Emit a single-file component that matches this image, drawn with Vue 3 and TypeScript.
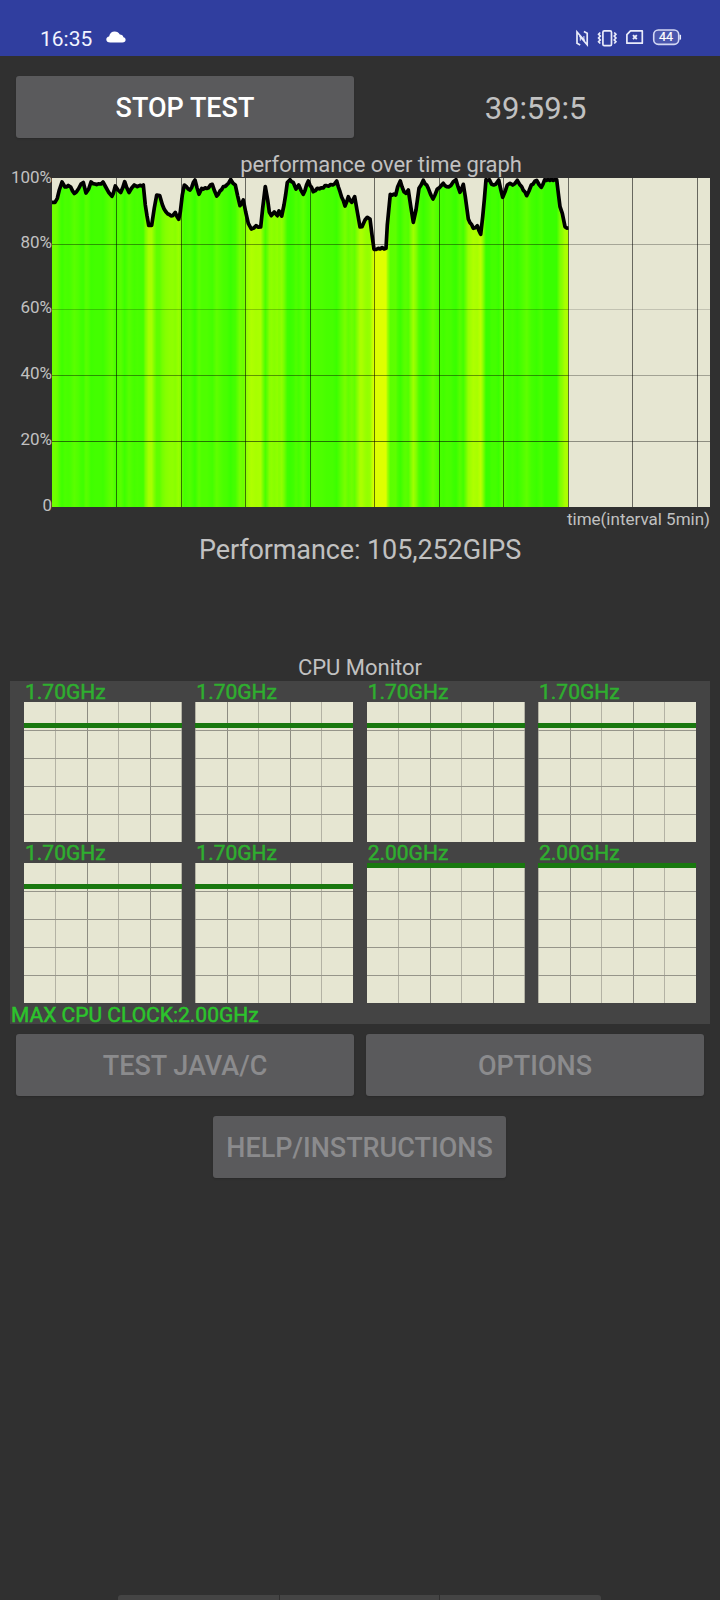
<script setup lang="ts">
type Point = [number, number]

// Plot area in page pixels: x 52..710, 3.29px per percent
const PLOT = { left: 52, width: 658, height: 329 }

// Offsets from the plot's left and top edges
const samples: Point[] = [
  [0, 24.3], [3, 24.3], [5.3, 20.3], [7.3, 12], [10, 4], [13, 9], [16.3, 7.5], [18.7, 9], [22.3, 15.5],
  [26.7, 10.5], [29, 6], [31.3, 4.5], [34, 15], [36.7, 11], [39, 4], [43, 6], [46.3, 5.8], [49, 6], [51, 4],
  [54, 9.5], [57, 14.8], [60, 18.3], [61.3, 15.5], [63.3, 8], [66, 12], [68.7, 14.5], [72.7, 3.7], [77, 14.5],
  [79.7, 10], [82.3, 7], [85.3, 8.7], [88, 7.3], [91.3, 7], [93.3, 27], [96.7, 47.3], [99.7, 47.3], [102.3, 30],
  [104.7, 17], [107.7, 17.5], [110.3, 26.5], [113.7, 33.5], [117.3, 36.5], [120.7, 37.7], [123.3, 34.5],
  [126.7, 41.3], [128.3, 34], [130.3, 17], [132.3, 7], [134.7, 9], [138, 12], [143, 2], [147, 16.3], [149.7, 10.5],
  [154.7, 10.5], [160.3, 6.3], [164.7, 18], [168, 13], [171.3, 8.7], [174.7, 7], [178.7, 1.5], [181, 5.3],
  [183.3, 7], [188, 27.7], [191.3, 22], [193.7, 34], [196.3, 45.3], [199.3, 51], [204, 47.7], [208.7, 49],
  [210.7, 30], [213.3, 8.5], [215.7, 22], [217.3, 34], [219.3, 37.7], [222.3, 34], [225.3, 37.7], [227, 33],
  [229.7, 38], [232, 27], [235.3, 4.5], [238, 1.7], [241.3, 4.5], [244, 11], [246.7, 7], [251.3, 16.3],
  [256.3, 3], [261.3, 13.7], [265.3, 10.3], [269.7, 9.8], [274.7, 7.7], [280.7, 7], [284.7, 3], [288, 13.7],
  [293, 28], [296.3, 18.7], [299.7, 24.3], [302.7, 18.7], [305.3, 33.7], [308, 49], [310, 48.7], [313, 42],
  [315.3, 39.3], [318, 41], [322, 71.3], [326.3, 70.3], [334, 70.3], [335.3, 47], [338.3, 16.3], [343.7, 17],
  [345.7, 8.7], [348.3, 3], [352, 13.7], [354, 15.3], [356.3, 12], [359, 30], [361.3, 44.3], [364, 32],
  [367, 10.3], [371.3, 2.3], [376.3, 10.3], [381, 21], [385.3, 11], [389.7, 7], [391.3, 5.3], [394.7, 8.7],
  [398.7, 7.7], [401.3, 3.7], [404, 1.7], [408, 14.3], [411.3, 6.3], [413.3, 18.7], [416.3, 41], [421.3, 50.3],
  [425.3, 47.7], [428.7, 56.3], [430.7, 38.7], [434, 1.7], [437.3, 1.7], [439.7, 6.3], [443.7, 6.3], [446.7, 2],
  [450.7, 19.3], [455.3, 7], [458, 5.3], [460.7, 7], [465.3, 2.3], [469.7, 8.7], [474.7, 17.7], [479.3, 7],
  [484.7, 2.3], [489.3, 9.3], [492.7, 1.7], [504.7, 1.7], [508, 28.7], [510.3, 35.3], [513, 48.7], [516.5, 50],
]

// Small saw-tooth noise so that the trace keeps its sampled look
const trace: Point[] = []
samples.forEach((p, i) => {
  trace.push(p)
  const next = samples[i + 1]
  if (!next) return
  const gap = next[0] - p[0]
  const steps = Math.floor(gap / 1.6)
  for (let s = 1; s < steps; s++) {
    const t = s / steps
    const jitter = s % 2 ? 0.7 : -0.7
    trace.push([p[0] + gap * t, Math.max(1.3, p[1] + (next[1] - p[1]) * t + jitter)])
  }
})

const linePoints = trace.map(([x, y]) => `${x.toFixed(1)},${y.toFixed(1)}`).join(' ')
const last = samples[samples.length - 1][0]
const areaPoints = `0,${PLOT.height} ${linePoints} ${last},${PLOT.height}`

const stops = samples.map(([x, y]) => ({
  offset: x / last,
  color: `rgb(${Math.round(Math.min(222, 53 + y * 2.4))},255,0)`,
}))

const columns = [64.5, 129.5, 193.5, 258.5, 322.5, 387.5, 451.5, 516.5, 580.5, 645.5]
const rows = [
  { y: 66.5, o: 0.4 },
  { y: 131.5, o: 0.22 },
  { y: 197.5, o: 0.42 },
  { y: 263.5, o: 0.55 },
]
const scale = [
  { label: '100%', y: 5 },
  { label: '80%', y: 70 },
  { label: '60%', y: 135 },
  { label: '40%', y: 201 },
  { label: '20%', y: 267 },
  { label: '0', y: 332.5 },
]

interface Core { clock: string; bar: number; odd: boolean }
const cores: Core[] = ['1.70', '1.70', '1.70', '1.70', '1.70', '1.70', '2.00', '2.00'].map((v, i) => ({
  clock: `${v}GHz`,
  bar: v === '2.00' ? 0 : 21,
  odd: i % 2 === 1,
}))
const evenLines = [31.5, 63.5, 94.5, 126.5, 157.5]
const oddLines = [0.5, 32.5, 63.5, 95.5, 126.5]
const isDark = (x: number, odd: boolean) => (odd ? x === 32.5 || x === 95.5 : x === 63.5 || x === 126.5)
const lineColor = (x: number, odd: boolean) => (isDark(x, odd) ? '#8d8c82' : '#b3b2a4')
</script>

<template>
  <div class="screen">
    <header class="status">
      <span class="clock">16:35</span>
      <svg class="cloud" width="20" height="12" viewBox="0 0 20 12">
        <path d="M4.3 11.4C1.8 11.4.3 10.2.3 8.4c0-1.7 1.2-2.7 2.8-2.9C3.6 2.3 5.8.4 8.7.4c2.3 0 4.1 1.1 5.1 3.2 2 0 3.3 1 3.6 2.6 1.4.3 2.2 1.2 2.2 2.5 0 1.7-1.2 2.7-3.2 2.7z" fill="#fff" />
      </svg>
      <svg class="icons" width="108" height="20" viewBox="574 28 108 20" fill="none" stroke="#e9ebfa" stroke-width="1.7">
        <path d="M580.2 45 577 43.3V32l7.6 8.800M583.900 31.500l3.300 1.700V44.800l-7.600-8.800" />
        <path d="M580.300 37.500v3.200M583.900 39.300v-3.200" stroke-width="1" />
        <rect x="602.900" y="30.900" width="8.600" height="14.700" rx="1.400" />
        <path d="M600.300 32.500l-1.700 1.700 1.700 1.900-1.700 1.900 1.700 1.900-1.700 1.900 1.700 1.700M614.200 32.500l1.700 1.700-1.700 1.900 1.700 1.900-1.700 1.900 1.700 1.900-1.700 1.700" stroke-width="1.700" />
        <path d="M630.500 30.900H642.300V43.200H626.900V34.600z" stroke-linejoin="round" />
        <path d="M633 35.200l3.800 3.900M636.800 35.200l-3.800 3.900" stroke-width="1.900" />
        <rect x="653.700" y="30" width="25" height="14.400" rx="4.600" fill="#4a56ad" stroke="#d3d8f4" stroke-width="1.600" />
        <path d="M680.300 34.800v4.800" stroke-width="1.500" />
        <text x="666.100" y="41.400" text-anchor="middle" class="battery">44</text>
      </svg>
    </header>

    <div class="pair top">
      <button class="btn">STOP TEST</button>
      <div class="timer">39:59:5</div>
    </div>

    <h2 class="title perf">performance over time graph</h2>
    <svg class="graph" :width="PLOT.width" :height="PLOT.height" :viewBox="`0 0 ${PLOT.width} ${PLOT.height}`">
      <defs>
        <linearGradient id="heat" gradientUnits="userSpaceOnUse" x1="0" y1="0" :x2="last" y2="0">
          <stop v-for="(s, i) in stops" :key="i" :offset="s.offset" :stop-color="s.color" />
        </linearGradient>
        <clipPath id="plot"><rect :width="PLOT.width" :height="PLOT.height" /></clipPath>
      </defs>
      <rect :width="PLOT.width" :height="PLOT.height" fill="#e6e6d2" />
      <g clip-path="url(#plot)">
        <polygon :points="areaPoints" fill="url(#heat)" />
        <line v-for="x in columns" :key="x" :x1="x" :x2="x" y1="0" :y2="PLOT.height" stroke="#000" stroke-opacity=".55" />
        <line v-for="r in rows" :key="r.y" x1="0" :x2="last" :y1="r.y" :y2="r.y" stroke="#000" :stroke-opacity="r.o" />
        <line v-for="r in rows" :key="r.y" :x1="last" :x2="PLOT.width" :y1="r.y" :y2="r.y" stroke="#000" :stroke-opacity="r.o * 0.7" />
        <polyline :points="linePoints" fill="none" stroke="#000" stroke-width="3.700" stroke-linejoin="round" />
      </g>
      <text v-for="s in scale" :key="s.label" x="0" :y="s.y" text-anchor="end" class="tick">{{ s.label }}</text>
      <text x="658" y="347" text-anchor="end" class="tick">time(interval 5min)</text>
    </svg>

    <p class="result">Performance: 105,252GIPS</p>

    <h2 class="title cpu">CPU Monitor</h2>
    <section class="panel">
      <div class="cores">
        <div v-for="(c, i) in cores" :key="i" class="core">
          <span class="ghz">{{ c.clock }}</span>
          <svg width="158" height="140" viewBox="0 0 158 140">
            <rect width="158" height="140" fill="#e6e6d2" />
            <line v-for="x in (c.odd ? oddLines : evenLines)" :key="x" :x1="x" :x2="x" y1="0" y2="140" :stroke="lineColor(x, c.odd)" />
            <line v-for="y in [28.5, 56.5, 84.5, 112.5]" :key="y" x1="0" x2="158" :y1="y" :y2="y" stroke="#96958a" />
            <rect :y="c.bar" width="158" height="5" fill="#19780f" />
          </svg>
        </div>
      </div>
      <div class="ghz max">MAX CPU CLOCK:2.00GHz</div>
    </section>

    <div class="pair bottom">
      <button class="btn" disabled>TEST JAVA/C</button>
      <button class="btn" disabled>OPTIONS</button>
    </div>
    <button class="btn help" disabled>HELP/INSTRUCTIONS</button>

    <footer class="dock"><i></i><i></i><i></i></footer>
  </div>
</template>

<style>
html, body { background: #303030; }
</style>

<style scoped>
.screen {
  width: 720px;
  height: 1600px;
  overflow: hidden;
  display: flex;
  flex-direction: column;
  background: #303030;
  color: #c1c1c1;
  font-family: Roboto, "Liberation Sans", sans-serif;
}
.status {
  height: 56px;
  flex: none;
  box-sizing: border-box;
  padding: 24px 38px 0 40px;
  display: flex;
  align-items: flex-start;
  background: #303e9f;
}
.clock {
  width: 66px;
  margin-top: 2px;
  font-size: 21px;
  line-height: 26px;
  color: #f2f4ff;
}
.cloud { margin-top: 7px; }
.icons { margin: 4px 0 0 auto; }
.battery { font-size: 12.500px; fill: #fff; stroke: #fff; stroke-width: .2px; }
.pair {
  display: grid;
  grid-template-columns: 338px 338px;
  gap: 12px;
  padding: 0 16px;
}
.top { margin-top: 20px; }
.btn {
  height: 62px;
  box-sizing: border-box;
  padding: 2px 0 0;
  border: 0;
  border-radius: 3px;
  background: #5a5a5c;
  color: #fff;
  font: 500 27px/60px Roboto, "Liberation Sans", sans-serif;
  box-shadow: 0 1px 2px rgba(0, 0, 0, .15);
}
.btn:disabled { color: #8b8b8d; }
.timer {
  height: 60px;
  padding: 2px 0 0 1px;
  font-size: 31px;
  line-height: 62px;
  letter-spacing: -.1px;
  text-align: center;
}
.title {
  margin: 0;
  font-size: 22px;
  font-weight: 400;
  line-height: 26px;
  text-align: center;
}
.perf { margin: 14px 0 0 42px; letter-spacing: -.07px; }
.graph {
  display: block;
  flex: none;
  margin-left: 52px;
  overflow: visible;
}
.tick { font-size: 17px; fill: #c1c1c1; }
.result {
  margin: 27px 0 0;
  font-size: 27px;
  line-height: 32px;
  letter-spacing: -.1px;
  text-align: center;
}
.cpu { margin-top: 89px; }
.panel {
  height: 343px;
  box-sizing: border-box;
  margin: 0 10px;
  padding-left: 1px;
  background: #444;
}
.cores {
  display: grid;
  grid-template-columns: repeat(4, 171.330px);
  padding-left: 13px;
}
.core { height: 161px; }
.core svg { display: block; }
.ghz {
  display: block;
  height: 21px;
  font-size: 21px;
  line-height: 23px;
  color: #2fae2f;
  -webkit-text-stroke: .5px #2fae2f;
}
.core .ghz { padding-left: 1px; }
.max { line-height: 24px; color: #2cc42c; -webkit-text-stroke-color: #2cc42c; }
.bottom { margin-top: 10px; }
.help { width: 293px; margin: 20px 0 0 213px; }
.dock {
  display: grid;
  grid-template-columns: 161px 159px 161px;
  gap: 1px;
  width: 483px;
  height: 5px;
  margin: auto 0 0 118px;
  border-radius: 3px 3px 0 0;
  overflow: hidden;
}
.dock i { background: #444; }
</style>
